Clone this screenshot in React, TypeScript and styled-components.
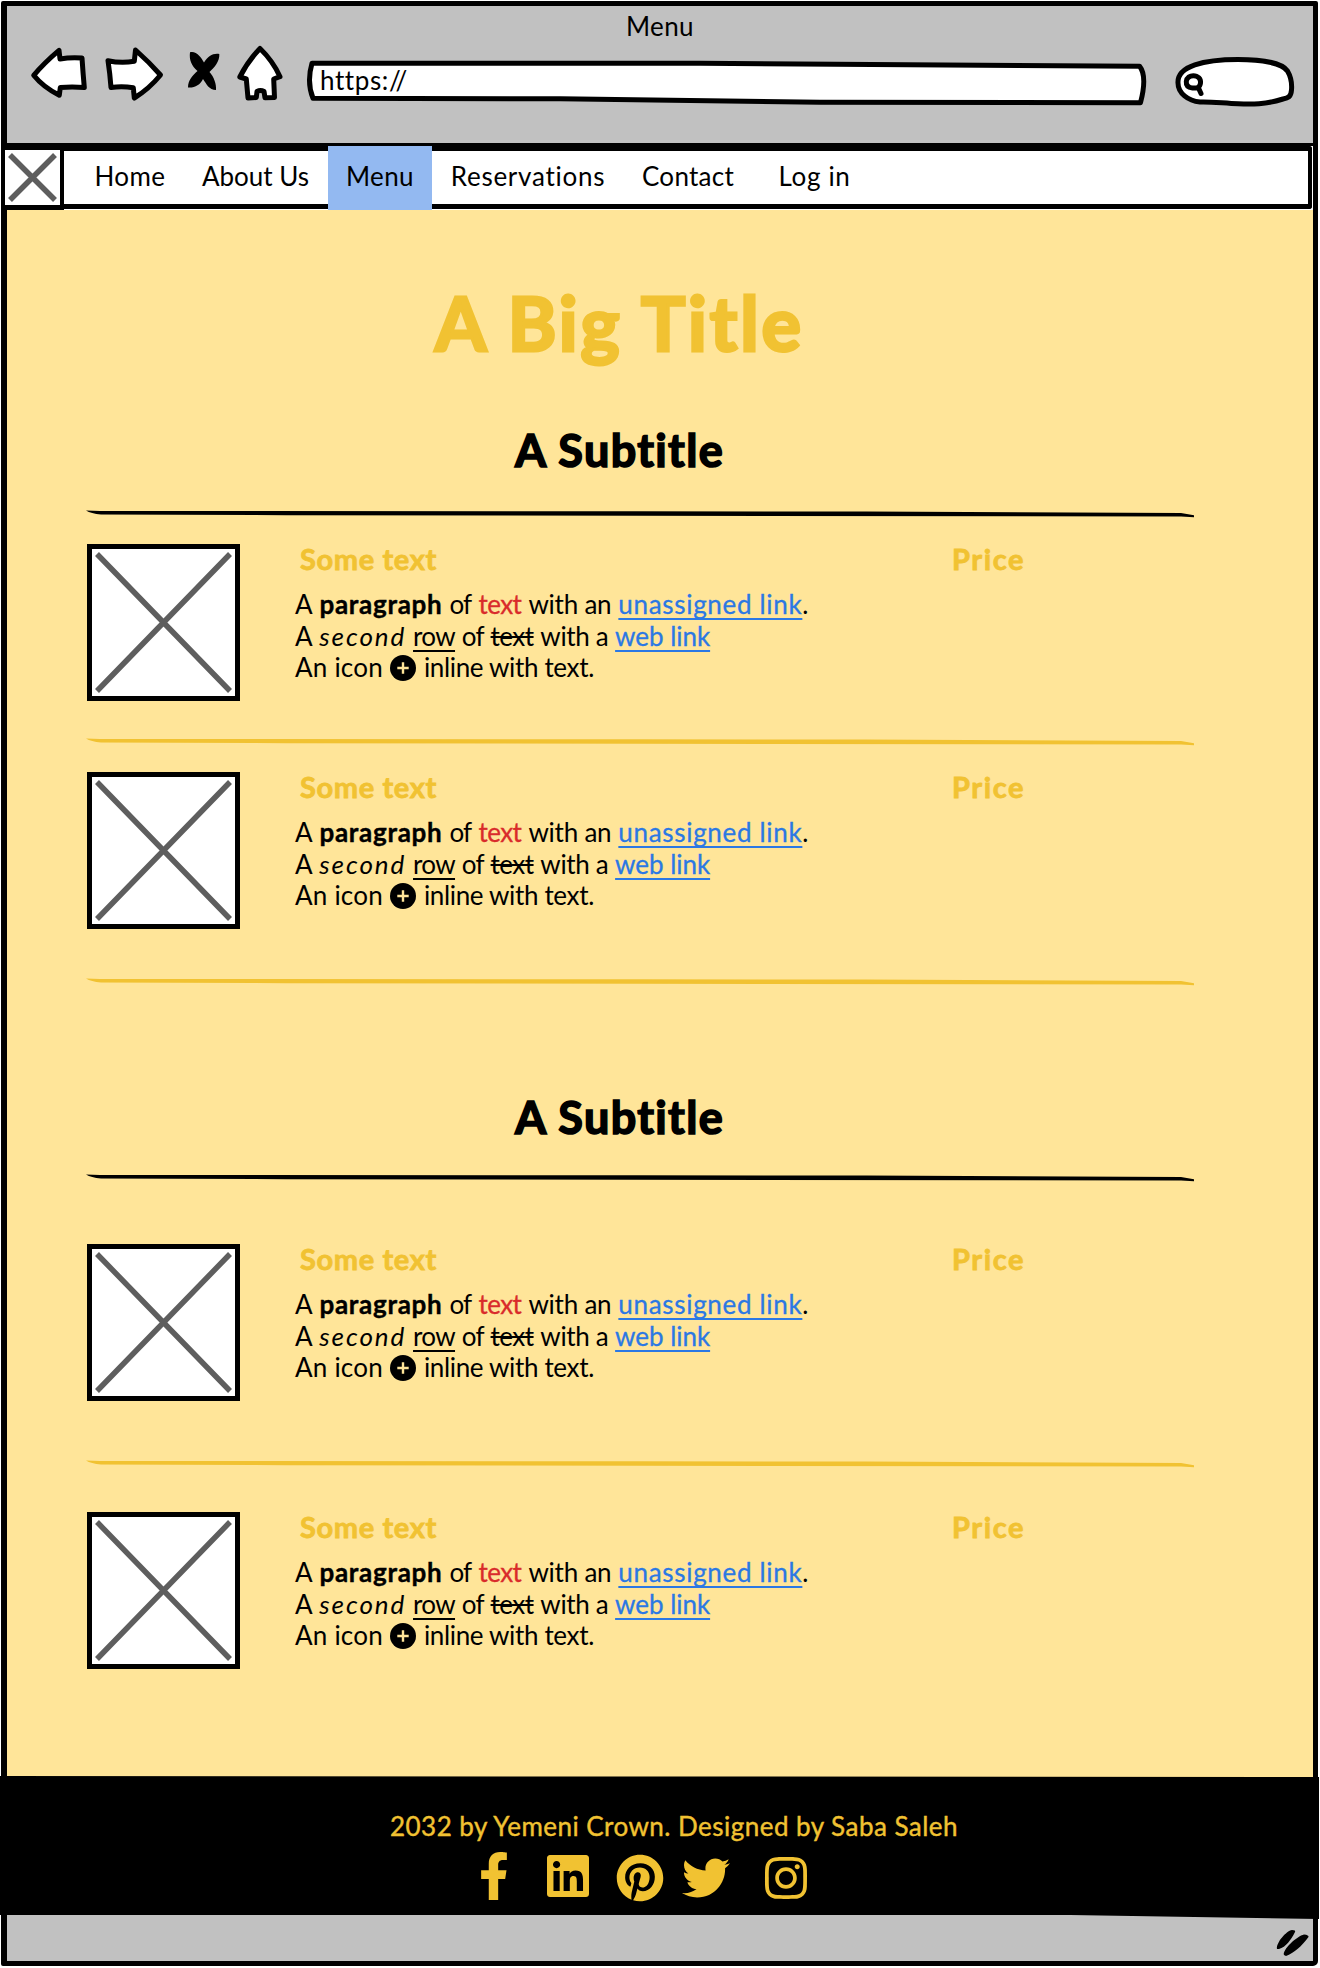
import React, { useLayoutEffect, useRef, useState } from "react";
import styled, { createGlobalStyle, css } from "styled-components";
import { FaFacebookF, FaInstagram, FaLinkedin, FaPinterest, FaTwitter } from "react-icons/fa";

const ink = "#000000";
const gold = "#f1c232";
const cream = "#ffe599";
const chrome = "#c1c1c1";

const GlobalStyle = createGlobalStyle`
  body {
    margin: 0;
    background: #ffffff;
    color: ${ink};
    font-family: Lato, "Open Sans", sans-serif;
    font-size: 26px;
  }
  * { box-sizing: border-box; }
`;

/* Text tracked out or in until it fills the requested width. */
const Tracked = styled.span`
  display: inline-block;
  white-space: pre;
`;

function Fit({ width, children, className }: { width: number; children: string; className?: string }) {
  const ref = useRef<HTMLSpanElement>(null);
  const [spacing, setSpacing] = useState(0);
  useLayoutEffect(() => {
    const el = ref.current;
    if (!el) return;
    el.style.letterSpacing = "0px";
    const next = (width - el.getBoundingClientRect().width) / children.length;
    el.style.letterSpacing = `${next}px`;
    setSpacing(next);
  }, [width, children]);
  return (
    <Tracked ref={ref} className={className} style={{ letterSpacing: spacing }}>
      {children}
    </Tracked>
  );
}

const Window = styled.div`
  display: flex;
  flex-direction: column;
  height: 1965px;
  margin: 1px 2px 2px 1px;
  border: 5px solid ${ink};
  border-left-width: 6px;
  border-radius: 2px 2px 5px 2px;
  background: ${cream};
`;

const Header = styled.header`
  height: 140px;
  flex: none;
  padding-top: 5px;
  background: ${chrome};
  border-bottom: 3px solid ${ink};
`;

const WindowTitle = styled.div`
  padding-left: 619px;
  line-height: 30px;
`;

const Toolbar = styled.div`
  display: flex;
  align-items: flex-start;
  height: 70px;
  padding-left: 23px;
`;

const ToolIcon = styled.svg<{ $gap?: number }>`
  flex: none;
  display: block;
  margin-left: ${(p) => p.$gap ?? 0}px;
  fill: #ffffff;
  stroke: ${ink};
  stroke-width: 5px;
  stroke-linejoin: round;
  stroke-linecap: round;
`;

const AddressBar = styled.div`
  display: grid;
  margin-left: 22px;
  > * { grid-area: 1 / 1; }
`;

const Address = styled.div`
  z-index: 1;
  padding: 24px 0 0 14px;
  line-height: 30px;
`;

const NavRow = styled.nav`
  display: flex;
  flex: none;
  height: 64px;
  margin-left: -6px;
  background: #ffffff;
`;

const LogoBox = styled.div`
  width: 63px;
  height: 65px;
  margin-top: -1px;
  border: 5px solid ${ink};
  border-left-width: 4px;
  border-right-width: 4px;
  background: #ffffff;
`;

const Tabs = styled.div`
  display: flex;
  flex: 1;
  height: 63px;
  padding-left: 13px;
  border: solid ${ink};
  border-width: 5px 4px 5px 0;
  border-radius: 0 3px 3px 0;
  margin-right: 1px;
`;

const Tab = styled.a<{ $width: number; $active?: boolean }>`
  width: ${(p) => p.$width}px;
  text-align: center;
  line-height: 50px;
  ${(p) =>
    p.$active &&
    css`
      height: 64px;
      margin-top: -5px;
      padding-top: 5px;
      background: #93b9f1;
    `}
`;

const Main = styled.main`
  height: 1566px;
  flex: none;
  width: 1187px;
  padding: 67px 0 0 79px;
`;

const Heading = styled.h1`
  margin: 0;
  padding-right: 41px;
  text-align: center;
  font-size: 74px;
  line-height: 92px;
  height: 90px;
  font-weight: 700;
  color: ${gold};
  -webkit-text-stroke: 3px ${gold};
  stroke-linejoin: round;
`;

const Subheading = styled.h2<{ $top: number }>`
  margin: ${(p) => p.$top}px 0 0;
  padding-right: 41px;
  text-align: center;
  font-size: 45px;
  line-height: 59px;
  height: 56px;
  font-weight: 700;
  -webkit-text-stroke: 1.6px ${ink};
  stroke-linejoin: round;
`;

const RuleSvg = styled.svg<{ $top: number; $tone: string }>`
  display: block;
  margin-top: ${(p) => p.$top}px;
  fill: ${(p) => p.$tone};
`;

const Item = styled.article<{ $top: number }>`
  display: grid;
  grid-template-columns: 209px 657px auto;
  height: 162px;
  margin-top: ${(p) => p.$top}px;
`;

const Picture = styled.div`
  width: 153px;
  height: 157px;
  margin: 3px 0 0 1px;
  border: 5px solid ${ink};
  background: #ffffff;
`;

const CrossSvg = styled.svg`
  display: block;
  stroke: #5e5e5e;
`;

const Label = styled.h3<{ $indent?: number }>`
  margin: 1px 0 12px ${(p) => p.$indent ?? 0}px;
  font-size: 29px;
  line-height: 34px;
  font-weight: 700;
  color: ${gold};
  -webkit-text-stroke: 0.8px ${gold};
`;

const Line = styled.div<{ $space: number }>`
  height: 31.5px;
  line-height: 32.5px;
  white-space: nowrap;
  word-spacing: ${(p) => p.$space}px;
  ${Tracked} { word-spacing: 0; }
`;

const Strong = styled(Fit)`
  font-weight: 700;
  -webkit-text-stroke: 0.4px ${ink};
`;
const Slanted = styled(Fit)`
  font-style: italic;
`;
const Red = styled(Fit)`
  color: #d92b2b;
  -webkit-text-stroke: 0.3px #d92b2b;
`;
const lined = css`
  text-decoration-thickness: 2px;
  text-decoration-skip-ink: none;
  text-underline-offset: 4px;
`;
const Underlined = styled(Fit)`
  text-decoration-line: underline;
  ${lined}
`;
const Struck = styled(Fit)`
  text-decoration-line: line-through;
  ${lined}
`;
const Link = styled(Underlined)`
  color: #2b78e4;
  -webkit-text-stroke: 0.3px #2b78e4;
`;

const PlusSvg = styled.svg`
  vertical-align: -4px;
`;

const Footer = styled.footer`
  flex: none;
  height: 143px;
  margin: 0 -6px 0 -7px;
  padding-top: 35px;
  background: ${ink};
  color: ${gold};
  clip-path: polygon(0 0, 100% 1px, 100% 100%, 1070px 139px, 600px 139px, 0 139px);
`;

const Credit = styled.div`
  padding-left: 390px;
  line-height: 30px;
  -webkit-text-stroke: 0.4px ${gold};
`;

const Social = styled.div`
  display: flex;
  align-items: flex-start;
  padding: 11px 0 0 470px;
`;

const SocialSlot = styled.span<{ $gap: number; $drop?: number }>`
  display: flex;
  width: 48px;
  margin: ${(p) => p.$drop ?? 0}px 0 0 ${(p) => p.$gap}px;
  font-size: 48px;
`;

const StatusBar = styled.div`
  flex: 1;
  display: flex;
  justify-content: flex-end;
  margin-top: -4px;
  background: ${chrome};
`;

const Body = styled.div`
  position: relative;
  z-index: 1;
`;

function Cross({ w, h, inset }: { w: number; h: number; inset: number }) {
  return (
    <CrossSvg width={w} height={h} strokeWidth={5.5}>
      <path d={`M${inset} ${inset}L${w - inset} ${h - inset}M${w - inset} ${inset}L${inset} ${h - inset}`} />
    </CrossSvg>
  );
}

function Rule({ top, tone = gold }: { top: number; tone?: string }) {
  return (
    <RuleSvg $top={top} $tone={tone} width="1108" height="8" viewBox="0 0 1108 8">
      <path d="M0 .6L14 1L550 1.2L780 1.6L1095 3L1108 5.3V7.2L1095 6.4L550 5.8L200 5.2L15 4.6Q5 3.6 0 .6Z" />
    </RuleSvg>
  );
}

function MenuItem({ top }: { top: number }) {
  return (
    <Item $top={top}>
      <Picture>
        <Cross w={143} h={147} inset={5} />
      </Picture>
      <div>
        <Label $indent={5}>
          <Fit width={137}>Some text</Fit>
        </Label>
        <Line $space={0.3}>
          <Fit width={17.5}>A</Fit> <Strong width={123}>paragraph</Strong> <Fit width={22}>of</Fit>{" "}
          <Red width={43}>text</Red> <Fit width={83}>with an</Fit> <Link width={184}>unassigned link</Link>
          <Fit width={5}>.</Fit>
        </Line>
        <Line $space={0.1}>
          <Fit width={17.5}>A</Fit> <Slanted width={87}>second</Slanted> <Underlined width={42}>row</Underlined>{" "}
          <Fit width={22}>of</Fit> <Struck width={43}>text</Struck> <Fit width={68}>with a</Fit>{" "}
          <Link width={95}>web link</Link>
        </Line>
        <Line $space={0.8}>
          <Fit width={88}>An icon</Fit>{" "}
          <PlusSvg width="26" height="26" viewBox="0 0 26 26">
            <circle cx="13" cy="13" r="13" />
            <path d="M13 7.3V18.7M7.3 13H18.7" stroke={cream} strokeWidth="2.4" />
          </PlusSvg>{" "}
          <Fit width={170}>inline with text.</Fit>
        </Line>
      </div>
      <Label>
        <Fit width={73}>Price</Fit>
      </Label>
    </Item>
  );
}

export default function App() {
  return (
    <>
      <GlobalStyle />
      <Window>
        <Header>
          <WindowTitle>
            <Fit width={68}>Menu</Fit>
          </WindowTitle>
          <Toolbar>
            <ToolIcon width="58" height="70" viewBox="30 41 58 70">
              <path d="M33.7 75.3Q44 63 59 50.3L60 59Q71 57 82 58Q83 73 84.3 87.5Q72 86.5 60.3 87.5L59.3 95.3Q43 87 33.7 75.3Z" />
            </ToolIcon>
            <ToolIcon $gap={16} width="60" height="70" viewBox="104 41 60 70">
              <path d="M108 60.7Q121 63.5 134.3 61.3L135.5 50Q149 62 160.5 75Q149 89 134.3 98L133.3 87.7Q122 86 111 87.5Q110 74 108 60.7Z" />
            </ToolIcon>
            <ToolIcon $gap={22} width="36" height="70" viewBox="186 41 36 70">
              <path
                fill="#000"
                stroke="none"
                d="M190 52.3C196 50.5 201 57 204 62.5C208 56 213 53 219.3 54C220 61 214 68 209.5 72C214 77 216.5 84 216 90C209 90 206.5 84 203 79C200 85 195 88 188 87.5C188 80 193 75 197.5 71C191.500 66 189 60 190 52.3Z"
              />
            </ToolIcon>
            <ToolIcon $gap={14} width="48" height="70" viewBox="236 41 48 70">
              <path d="M260 48.5Q273 61 280 76.700L273.700 79L274.500 97.500L265 97.800L264 91.500Q260.500 89.500 257 91.500L256.300 97.500L248 98L246.300 79L239.800 77Q248 61 260 48.500Z" />
            </ToolIcon>
            <AddressBar>
              <ToolIcon width="842" height="70" viewBox="306 41 842 70">
                <path d="M312 63.300L700 63.300L1139.500 66.200Q1147.500 76 1140.500 102.700L820 102.200L560 98.800L313 98.300Q306.500 82 312 63.300Z" />
              </ToolIcon>
              <Address>
                <Fit width={87}>https://</Fit>
              </Address>
            </AddressBar>
            <ToolIcon $gap={24} width="124" height="70" viewBox="1172 41 124 70">
              <path d="M1178 83C1177 66 1204 59.500 1238 59.500C1262 59.500 1282 63 1287.500 71C1291 77 1292 84 1291.500 90C1291 97 1288 98 1283 99C1265 104.500 1252 104.500 1238 103.800C1225 103.500 1212 101.500 1200 102C1188 101 1178 93 1178 83Z" />
              <path d="M1193.300 75.700C1198 75.700 1201 79 1200.500 83C1200 87.500 1197 88.500 1192.500 88C1188 87.500 1186 85 1186.300 81.500C1186.800 77.500 1190 75.700 1193.300 75.700ZM1198.500 88L1201 93.500" />
            </ToolIcon>
          </Toolbar>
        </Header>
        <Body>
          <NavRow>
            <LogoBox>
              <Cross w={55} h={55} inset={5} />
            </LogoBox>
            <Tabs>
              <Tab $width={106}>
                <Fit width={71}>Home</Fit>
              </Tab>
              <Tab $width={145}>
                <Fit width={107}>About Us</Fit>
              </Tab>
              <Tab $width={104} $active>
                <Fit width={68}>Menu</Fit>
              </Tab>
              <Tab $width={192}>
                <Fit width={155}>Reservations</Fit>
              </Tab>
              <Tab $width={128}>
                <Fit width={92}>Contact</Fit>
              </Tab>
              <Tab $width={125}>
                <Fit width={72}>Log in</Fit>
              </Tab>
            </Tabs>
          </NavRow>
          <Main>
            <Heading>
              <Fit width={369}>A Big Title</Fit>
            </Heading>
            <Subheading $top={54}>
              <Fit width={210}>A Subtitle</Fit>
            </Subheading>
            <Rule top={33} tone={ink} />
            <MenuItem top={23} />
            <Rule top={35} />
            <MenuItem top={23} />
            <Rule top={47} />
            <Subheading $top={102}>
              <Fit width={210}>A Subtitle</Fit>
            </Subheading>
            <Rule top={30} tone={ink} />
            <MenuItem top={59} />
            <Rule top={57} />
            <MenuItem top={41} />
          </Main>
          <Footer>
            <Credit>
              <Fit width={568}>2032 by Yemeni Crown. Designed by Saba Saleh</Fit>
            </Credit>
            <Social>
              <SocialSlot $gap={0}>
                <FaFacebookF />
              </SocialSlot>
              <SocialSlot $gap={26}>
                <FaLinkedin />
              </SocialSlot>
              <SocialSlot $gap={24} $drop={2}>
                <FaPinterest />
              </SocialSlot>
              <SocialSlot $gap={18} $drop={2}>
                <FaTwitter />
              </SocialSlot>
              <SocialSlot $gap={32} $drop={2}>
                <FaInstagram />
              </SocialSlot>
            </Social>
          </Footer>
        </Body>
        <StatusBar>
          <svg width="44" height="46" viewBox="1269 1915 44 46">
            <path d="M1277 1949C1276 1943 1286 1931 1292 1930Q1296 1930 1295 1932C1291 1940 1286 1947 1279 1949ZM1284 1955C1282 1950 1297 1936 1304 1934.500Q1309 1935 1308.500 1937C1302 1946 1294 1953 1286 1956Z" />
          </svg>
        </StatusBar>
      </Window>
    </>
  );
}
